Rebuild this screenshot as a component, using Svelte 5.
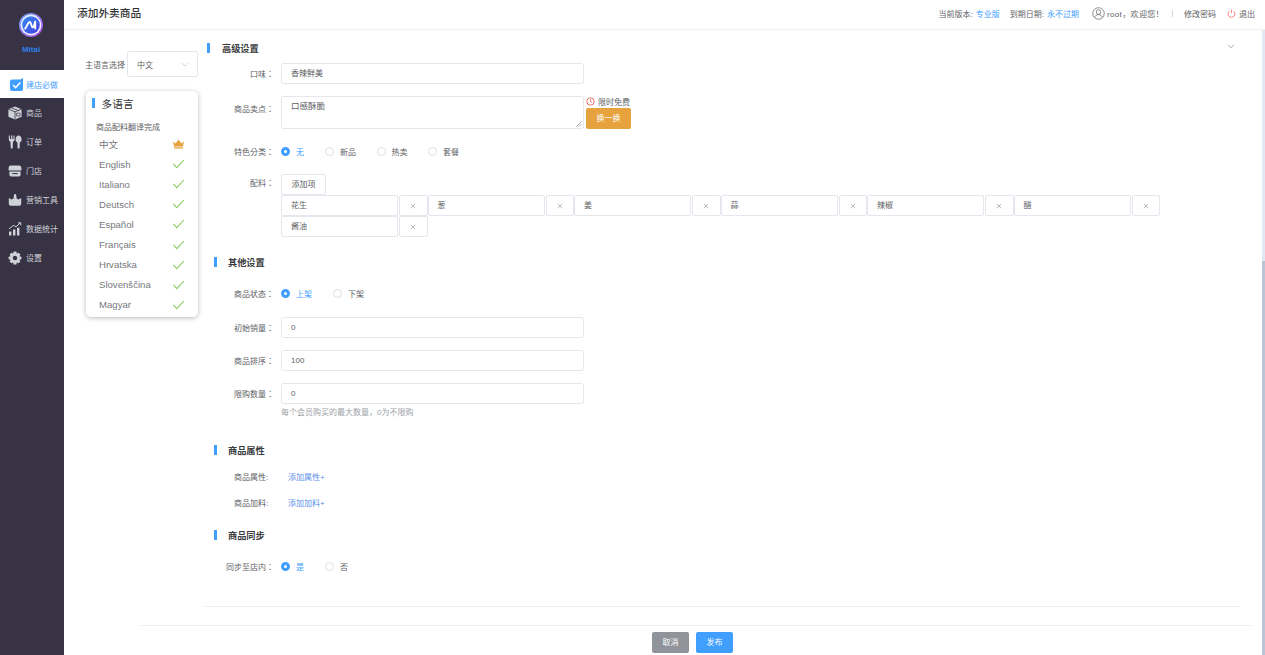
<script>
  const menu = [
    { label: '商品', icon: 'box' },
    { label: '订单', icon: 'food' },
    { label: '门店', icon: 'store' },
    { label: '营销工具', icon: 'hand' },
    { label: '数据统计', icon: 'chart' },
    { label: '设置', icon: 'gear' }
  ];
  const langs = ['English', 'Italiano', 'Deutsch', 'Español', 'Français', 'Hrvatska', 'Slovenščina', 'Magyar'];
  const tags = ['花生', '葱', '姜', '蒜', '辣椒', '醋', '酱油'];
  const feature = ['无', '新品', '热卖', '套餐'];
</script>

<div class="app">
  <aside>
    <div class="brand">
      <svg class="logo" viewBox="0 0 24 24" aria-hidden="true">
        <defs>
          <linearGradient id="ring" x1="0" y1="0" x2="1" y2="1">
            <stop offset="0" stop-color="#6fa8f7" />
            <stop offset="1" stop-color="#b44be0" />
          </linearGradient>
          <linearGradient id="core" x1="0" y1="0" x2="1" y2="1">
            <stop offset="0" stop-color="#2f8bf2" />
            <stop offset="1" stop-color="#4a3fe0" />
          </linearGradient>
        </defs>
        <circle cx="12" cy="12" r="12" fill="url(#ring)" />
        <circle cx="12" cy="12" r="10.4" fill="#eef0fb" />
        <circle cx="12" cy="12" r="8.8" fill="url(#core)" />
        <path d="M6.2 15.6 C8 12.6 9.4 9 10.8 9 C12.2 9 12.4 14.4 13.8 14.4 C15 14.4 15.6 10.4 16.2 8.6 V15.6" fill="none" stroke="#fff" stroke-width="1.9" stroke-linejoin="round" stroke-linecap="round" />
      </svg>
      <div class="brand-name">Mitai</div>
    </div>
    <div class="nav-active">
      <svg class="nav-icon" viewBox="0 0 13 13" aria-hidden="true">
        <path d="M2 1.6 H10.4 L13 0 V11 A2 2 0 0 1 11 13 H2 A2 2 0 0 1 0 11 V3.6 A2 2 0 0 1 2 1.6 Z" fill="#409eff" />
        <path d="M3 7 L5.6 9.6 L10.4 4.6" fill="none" stroke="#fff" stroke-width="1.5" />
      </svg>
      <span>建店必做</span>
    </div>
    <nav>
      {#each menu as m}
        <div class="nav-item">
          <svg class="nav-icon" viewBox="0 0 14 14" aria-hidden="true">
            {#if m.icon === 'box'}
              <path d="M7 .6 L13.6 3.2 V10.8 L7 13.4 L.4 10.8 V3.2 Z" fill="#cfd2d8" />
              <path d="M.4 3.2 L7 5.8 L13.6 3.2 M7 5.8 V13.4 M3.6 1.9 L10.2 4.5" fill="none" stroke="#373344" stroke-width=".8" />
              <path d="M8.6 7.2 H12 V10 H8.6 Z" fill="none" stroke="#373344" stroke-width=".7" />
            {:else if m.icon === 'food'}
              <path d="M.8 .6 V4.6 A2.4 2.4 0 0 0 2.4 6.8 L2.8 13.6 H4.6 L5 6.8 A2.4 2.4 0 0 0 6.6 4.6 V.6 H5.5 V4 H4.3 V.6 H3.1 V4 H1.9 V.6 Z" fill="#cfd2d8" />
              <path d="M10.6 .6 C12.6 .6 13.6 2.6 13.6 4.4 C13.6 6 12.8 7 11.8 7.4 L11.6 13.6 H9.6 L9.4 7.4 C8.4 7 7.6 6 7.6 4.4 C7.6 2.6 8.6 .6 10.6 .6 Z" fill="#cfd2d8" />
            {:else if m.icon === 'store'}
              <path d="M3 1.6 H11 A2.4 2.4 0 0 1 13.4 4 V6.4 H.6 V4 A2.4 2.4 0 0 1 3 1.6 Z" fill="#cfd2d8" />
              <path d="M1.4 7.4 H12.6 V10.8 A1.6 1.6 0 0 1 11 12.4 H3 A1.6 1.6 0 0 1 1.4 10.8 Z" fill="#cfd2d8" />
              <path d="M4.2 9.6 H9.8" stroke="#373344" stroke-width="1" />
            {:else if m.icon === 'hand'}
              <path d="M.8 5 L3.6 6.6 L5.6 5.6 L6 2 A1.1 1.1 0 0 1 8.2 2 L8.6 5.6 L10.6 6.6 L13.2 5 V10.8 A2 2 0 0 1 11.2 12.8 H2.8 A2 2 0 0 1 .8 10.8 Z" fill="#cfd2d8" />
            {:else if m.icon === 'chart'}
              <path d="M1 9.6 H3.4 V13.4 H1 Z M5 7.6 H7.4 V13.4 H5 Z M9 5.8 H11.4 V13.4 H9 Z" fill="#cfd2d8" />
              <path d="M1 7 L5.4 3.4 L8 4.8 L12.2 1 M10 .8 H12.8 V3.4" fill="none" stroke="#cfd2d8" stroke-width="1" />
            {:else}
              <path d="M5.6 .6 H8.4 L8.8 2.6 L10.6 1.7 L12.4 3.5 L11.4 5.3 L13.4 5.7 V8.3 L11.4 8.7 L12.4 10.5 L10.6 12.3 L8.8 11.4 L8.4 13.4 H5.6 L5.2 11.4 L3.4 12.3 L1.6 10.5 L2.6 8.7 L.6 8.3 V5.7 L2.6 5.3 L1.6 3.5 L3.4 1.7 L5.2 2.6 Z" fill="#cfd2d8" />
              <circle cx="7" cy="7" r="2.2" fill="#373344" />
            {/if}
          </svg>
          <span>{m.label}</span>
        </div>
      {/each}
    </nav>
  </aside>

  <div class="main">
    <header>
      <div class="title">添加外卖商品</div>
      <div class="meta">
        <span>当前版本:</span><span class="link ml3">专业版</span>
        <span class="ml10">到期日期:</span><span class="link ml3">永不过期</span>
        <svg class="user" viewBox="0 0 14 14" aria-hidden="true">
          <circle cx="7" cy="7" r="6.2" fill="none" stroke="#666" stroke-width=".8" />
          <circle cx="7" cy="5.4" r="2.4" fill="none" stroke="#666" stroke-width=".8" />
          <path d="M2.8 11.4 C3.4 9.2 5 8.2 7 8.2 C9 8.2 10.6 9.2 11.2 11.4" fill="none" stroke="#666" stroke-width=".8" />
        </svg>
        <span class="welcome">root，欢迎您！</span>
        <span class="sep"></span>
        <span>修改密码</span>
        <svg class="power" viewBox="0 0 10 10" aria-hidden="true">
          <path d="M3 2.2 A3.8 3.8 0 1 0 7 2.2" fill="none" stroke="#f56c6c" stroke-width=".9" />
          <path d="M5 .8 V4.4" stroke="#f56c6c" stroke-width=".9" />
        </svg>
        <span class="ml3">退出</span>
      </div>
    </header>

    <div class="below">
      <div class="content">
        <div class="body">
          <div class="side">
            <div class="lang-select">
              <span class="lang-label">主语言选择</span>
              <div class="select">
                <span>中文</span>
                <svg class="chev" viewBox="0 0 10 6" aria-hidden="true"><path d="M1 1 L5 5 L9 1" fill="none" stroke="#c0c4cc" stroke-width=".9" /></svg>
              </div>
            </div>
            <div class="card">
              <div class="card-title"><i></i>多语言</div>
              <div class="card-sub">商品配料翻译完成</div>
              <div class="lang-row">
                <span>中文</span>
                <svg class="status" viewBox="0 0 13 10" aria-hidden="true">
                  <path d="M1 2.6 L3.6 4.6 L6.5 .6 L9.4 4.6 L12 2.6 L11 7.4 H2 Z M2 8.2 H11 V9.6 H2 Z" fill="#e6a23c" />
                </svg>
              </div>
              {#each langs as l}
                <div class="lang-row">
                  <span>{l}</span>
                  <svg class="status" viewBox="0 0 13 10" aria-hidden="true">
                    <path d="M1.4 5 L4.8 8.6 L11.8 1.2" fill="none" stroke="#8fce6c" stroke-width="1.1" />
                  </svg>
                </div>
              {/each}
            </div>
          </div>

          <div class="form">
            <div class="head first"><i></i>高级设置</div>
            <svg class="collapse" viewBox="0 0 10 6" aria-hidden="true"><path d="M1 1 L5 4.6 L9 1" fill="none" stroke="#909399" stroke-width=".9" /></svg>

            <div class="row mt8">
              <label>口味：</label>
              <div class="input">香辣鲜美</div>
            </div>

            <div class="row top mt12">
              <label class="lab-area">商品卖点：</label>
              <div class="input area">
                口感酥脆
                <svg class="grip" viewBox="0 0 6 6" aria-hidden="true"><path d="M0.5 5.5 L5.5 .5 M3 5.5 L5.5 3" stroke="#777" stroke-width=".6" /></svg>
              </div>
              <div class="swap">
                <div class="limit">
                  <svg viewBox="0 0 10 10" aria-hidden="true">
                    <circle cx="5" cy="5" r="4.1" fill="none" stroke="#e4503c" stroke-width=".9" />
                    <path d="M5 2.6 V5.2 L7 6.2" fill="none" stroke="#e4503c" stroke-width=".8" />
                  </svg>
                  限时免费
                </div>
                <div class="swap-btn">换一换</div>
              </div>
            </div>

            <div class="row radio-row feat mt-r1">
              <label>特色分类：</label>
              {#each feature as f, i}
                <span class="radio" class:on={i === 0}><b></b>{f}</span>
              {/each}
            </div>

            <div class="row top mt-r1">
              <label class="lab-add">配料：</label>
              <div class="tagwrap">
                <div class="add">添加项</div>
                <div class="tags">
                  {#each tags as t}
                    <div class="tag">
                      <div class="tag-input">{t}</div>
                      <div class="tag-x">
                        <svg viewBox="0 0 6 6" aria-hidden="true"><path d="M.8 .8 L5.2 5.2 M5.2 .8 L.8 5.2" stroke="#8a8d93" stroke-width=".6" /></svg>
                      </div>
                    </div>
                  {/each}
                </div>
              </div>
            </div>

            <div class="head mt17"><i></i>其他设置</div>

            <div class="row radio-row status-r mt18">
              <label>商品状态：</label>
              <span class="radio on"><b></b>上架</span>
              <span class="radio"><b></b>下架</span>
            </div>
            <div class="row mt16">
              <label>初始销量：</label>
              <div class="input">0</div>
            </div>
            <div class="row mt12">
              <label>商品排序：</label>
              <div class="input">100</div>
            </div>
            <div class="row mt12">
              <label>限购数量：</label>
              <div class="input">0</div>
            </div>
            <div class="hint">每个会员购买的最大数量，0为不限购</div>

            <div class="head mt24"><i></i>商品属性</div>
            <div class="attr mt14"><label>商品属性:</label><span class="attr-link">添加属性+</span></div>
            <div class="attr mt14"><label>商品加料:</label><span class="attr-link">添加加料+</span></div>

            <div class="head mt19"><i></i>商品同步</div>
            <div class="row radio-row sync mt18">
              <label>同步至店内：</label>
              <span class="radio on"><b></b>是</span>
              <span class="radio"><b></b>否</span>
            </div>
            <div class="rule"></div>
          </div>
        </div>
        <footer>
          <div class="btn grey">取消</div>
          <div class="btn blue">发布</div>
        </footer>
      </div>
      <div class="scrollbar"><div class="thumb"></div></div>
    </div>
  </div>
</div>

<style>
  :global(body) {
    margin: 0;
    overflow: hidden;
    background: #fff;
  }
  .app {
    display: flex;
    width: 1265px;
    height: 655px;
    overflow: hidden;
    font-family: "Liberation Sans", "Noto Sans CJK SC", sans-serif;
    font-size: 8px;
    color: #606266;
  }
  aside {
    width: 64px;
    flex: none;
    background: #373344;
    color: #cfd2d8;
  }
  .brand {
    height: 70px;
    box-sizing: border-box;
    padding: 13px 2px 0 0;
    text-align: center;
  }
  .logo {
    display: block;
    width: 24px;
    height: 24px;
    margin: 0 auto;
  }
  .brand-name {
    margin-top: 8px;
    font-size: 8px;
    font-weight: 700;
    line-height: 9px;
    color: #2f7fe8;
  }
  .nav-active {
    display: flex;
    align-items: center;
    height: 28px;
    padding-left: 10px;
    background: #fff;
    color: #409eff;
  }
  .nav-icon {
    width: 13px;
    height: 13px;
    flex: none;
    margin-right: 3px;
  }
  .nav-item {
    display: flex;
    align-items: center;
    height: 29px;
    padding-left: 8px;
  }
  .nav-item .nav-icon {
    width: 14px;
    height: 14px;
    margin-right: 4px;
  }
  .main {
    flex: 1;
    min-width: 0;
    display: flex;
    flex-direction: column;
  }
  header {
    height: 30px;
    box-sizing: border-box;
    flex: none;
    display: flex;
    justify-content: space-between;
    align-items: flex-start;
    padding: 0 10px 0 13px;
    border-bottom: 1px solid #f0f1f5;
  }
  .title {
    margin-top: 6px;
    font-size: 10.7px;
    line-height: 14px;
    font-weight: 500;
    color: #303133;
  }
  .meta {
    display: flex;
    align-items: center;
    height: 27px;
  }
  .link {
    color: #409eff;
  }
  .ml3 { margin-left: 3px; }
  .ml10 { margin-left: 10px; }
  .user {
    width: 13px;
    height: 13px;
    margin-left: 13px;
    margin-right: 2px;
  }
  .welcome {
    width: 53px;
    white-space: nowrap;
    letter-spacing: 0.35px;
  }
  .sep {
    width: 1px;
    height: 7px;
    margin: 0 11px 0 12px;
    background: #d4d6dc;
  }
  .power {
    width: 9px;
    height: 9px;
    margin-left: 11px;
  }
  .below {
    flex: 1;
    min-height: 0;
    display: flex;
  }
  .content {
    flex: 1;
    min-width: 0;
    display: flex;
    flex-direction: column;
  }
  .body {
    flex: 1;
    min-height: 0;
    display: flex;
  }
  .side {
    width: 140px;
    flex: none;
    box-sizing: border-box;
    padding: 21px 6px 0 21px;
  }
  .lang-select {
    display: flex;
    align-items: center;
    margin-bottom: 14px;
  }
  .lang-label {
    width: 42px;
    flex: none;
    white-space: nowrap;
  }
  .select {
    flex: 1;
    height: 26px;
    box-sizing: border-box;
    display: flex;
    align-items: center;
    justify-content: space-between;
    padding: 0 8px 0 9px;
    border: 1px solid #e4e7ed;
    border-radius: 2px;
  }
  .chev {
    width: 8px;
    height: 5px;
  }
  .card {
    height: 226px;
    margin-left: 1px;
    box-sizing: border-box;
    padding-top: 5px;
    background: #fff;
    border-radius: 5px;
    box-shadow: 0 1px 5px rgba(0, 0, 0, 0.28);
  }
  .card-title {
    display: flex;
    align-items: center;
    height: 14px;
    padding-left: 6px;
    font-size: 10.7px;
    color: #303133;
  }
  .card-title i {
    width: 2.5px;
    height: 10px;
    margin-right: 7px;
    background: #409eff;
  }
  .card-sub {
    margin-top: 13px;
    margin-bottom: 1px;
    padding-left: 10px;
    line-height: 10px;
  }
  .lang-row {
    display: flex;
    align-items: center;
    justify-content: space-between;
    height: 20.1px;
    padding: 0 13px;
    font-size: 9.6px;
    color: #77797e;
  }
  .status {
    width: 13px;
    height: 10px;
  }
  .form {
    flex: 1;
    min-width: 0;
    margin-right: 22px;
    position: relative;
    padding-top: 11px;
  }
  .head {
    display: flex;
    align-items: center;
    height: 14px;
    padding-left: 10px;
    font-size: 9.2px;
    font-weight: 700;
    color: #3a3c40;
  }
  .head i {
    width: 3px;
    height: 10px;
    margin-right: 11px;
    background: #409eff;
  }
  .head.first {
    padding-left: 3px;
  }
  .head.first i {
    margin-right: 12px;
  }
  .collapse {
    position: absolute;
    right: 5px;
    top: 14px;
    width: 8px;
    height: 5px;
  }
  .row {
    display: flex;
    align-items: center;
  }
  .row.top {
    align-items: flex-start;
  }
  .row label {
    width: 70px;
    flex: none;
    margin-right: 7px;
    text-align: right;
    white-space: nowrap;
    font-family: "Liberation Sans", "Noto Sans CJK TC", sans-serif;
  }
  .lab-area {
    padding-top: 9px;
    line-height: 10px;
  }
  .lab-add {
    padding-top: 5px;
    line-height: 10px;
  }
  .input {
    width: 303px;
    height: 21px;
    box-sizing: border-box;
    flex: none;
    padding: 0 9px;
    line-height: 19px;
    border: 1px solid #e4e7ed;
    border-radius: 2.5px;
  }
  .area {
    height: 33px;
    position: relative;
    line-height: 18px;
    font-size: 8.5px;
  }
  .grip {
    position: absolute;
    right: 1px;
    bottom: 1px;
    width: 6px;
    height: 6px;
  }
  .swap {
    margin-left: 2px;
    width: 45px;
  }
  .limit {
    display: flex;
    align-items: center;
    height: 10px;
    margin-bottom: 2px;
    white-space: nowrap;
  }
  .limit svg {
    width: 9px;
    height: 9px;
    margin-right: 3px;
  }
  .swap-btn {
    height: 21px;
    line-height: 21px;
    text-align: center;
    color: #fff;
    background: #e6a23c;
    border-radius: 2px;
  }
  .radio {
    display: flex;
    align-items: center;
    white-space: nowrap;
  }
  .radio b {
    width: 9px;
    height: 9px;
    box-sizing: border-box;
    margin-right: 6px;
    border: 1px solid #dcdfe6;
    border-radius: 50%;
    background: #fff;
  }
  .radio.on {
    color: #409eff;
  }
  .radio.on b {
    border: 3px solid #409eff;
  }
  .radio-row {
    height: 14px;
  }
  .feat .radio { width: 51.5px; }
  .feat .radio:first-of-type { width: 44px; }
  .status-r .radio { width: 52px; }
  .sync .radio { width: 44px; }
  .tagwrap {
    width: 880px;
  }
  .add {
    width: 45px;
    height: 21px;
    box-sizing: border-box;
    line-height: 19px;
    text-align: center;
    border: 1px solid #e4e7ed;
    border-radius: 2px;
  }
  .tags {
    display: flex;
    flex-wrap: wrap;
  }
  .tag {
    width: 146.5px;
    height: 21.2px;
    display: flex;
    box-sizing: border-box;
  }
  .tag-input {
    flex: 1;
    box-sizing: border-box;
    padding-left: 9px;
    line-height: 19px;
    border: 1px solid #e4e7ed;
    border-radius: 2px;
  }
  .tag-x {
    width: 28.5px;
    flex: none;
    box-sizing: border-box;
    margin-left: 1px;
    display: flex;
    align-items: center;
    justify-content: center;
    border: 1px solid #e4e7ed;
    border-radius: 2px;
  }
  .tag-x svg {
    width: 6px;
    height: 6px;
  }
  .hint {
    margin: 3px 0 0 77px;
    line-height: 12px;
    color: #a0a3a8;
  }
  .attr {
    display: flex;
    align-items: center;
    height: 12px;
  }
  .attr label {
    width: 30px;
    margin-left: 30px;
    margin-right: 24px;
    white-space: nowrap;
    flex: none;
  }
  .attr-link {
    color: #5b8fe8;
  }
  .rule {
    margin-top: 32px;
    height: 1px;
    background: #eff0f3;
  }
  .mt8 { margin-top: 8px; }
  .mt12 { margin-top: 12px; }
  .mt14 { margin-top: 14px; }
  .mt16 { margin-top: 16px; }
  .mt17 { margin-top: 17.5px; }
  .mt18 { margin-top: 18px; }
  .mt19 { margin-top: 19px; }
  .mt24 { margin-top: 24px; }
  .mt-r1 { margin-top: 15.5px; }
  footer {
    height: 30px;
    flex: none;
    box-sizing: border-box;
    margin: 0 10px 0 76px;
    padding-top: 6px;
    border-top: 1px solid #eff0f3;
    display: flex;
    justify-content: flex-start;
    gap: 7px;
    padding-left: 512px;
  }
  .btn {
    width: 37px;
    height: 21px;
    line-height: 21px;
    text-align: center;
    color: #fff;
    border-radius: 2px;
  }
  .grey { background: #909399; }
  .blue { background: #409eff; }
  .scrollbar {
    width: 3px;
    flex: none;
    display: flex;
    flex-direction: column;
    justify-content: flex-end;
    background: #e3e9f2;
  }
  .thumb {
    height: 394px;
    background: #b9c4d4;
  }
</style>
